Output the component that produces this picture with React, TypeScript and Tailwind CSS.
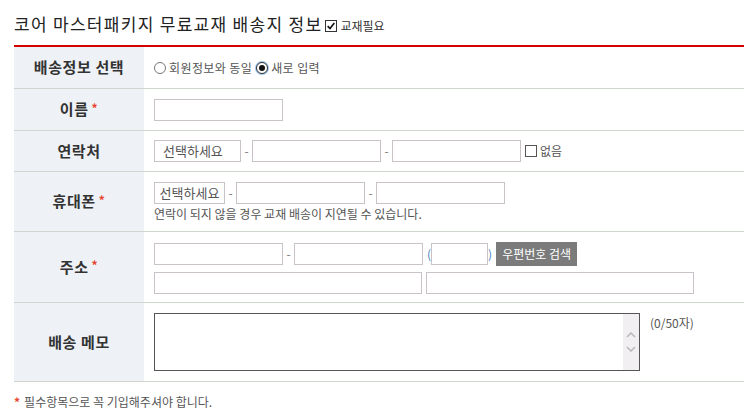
import React from 'react'

const font = "font-['Noto_Sans_CJK_KR','Noto_Sans',sans-serif]"

function Star() {
  return <span className="ml-[3px] text-[12px] font-bold text-[#e8412c] relative -top-[2px]">*</span>
}

function Box({ w, children }: { w: string; children?: React.ReactNode }) {
  return (
    <div className={`${w} h-[22px] border border-[#c9c2c9] bg-white flex items-center px-[8px] whitespace-nowrap text-[13px] text-[#555]`}>
      {children}
    </div>
  )
}

function Dash() {
  return <span className="w-[11px] text-center text-[12px] text-[#777]">-</span>
}

function Row({
  label,
  required,
  h,
  top,
  children,
}: {
  label: string
  required?: boolean
  h: string
  top?: boolean
  children: React.ReactNode
}) {
  return (
    <div className={`grid grid-cols-[130px_1fr] ${h} border-b border-[#cfd6cd]`}>
      <div className="flex items-center justify-center bg-[#eef1f6] text-[15px] font-bold tracking-[0.6px] text-[#333]">
        {label}
        {required && <Star />}
      </div>
      <div className={`flex flex-col pl-[10px] ${top ? 'pt-[10px]' : 'justify-center'}`}>{children}</div>
    </div>
  )
}

function Radio({ checked, label }: { checked?: boolean; label: string }) {
  return (
    <label className="flex items-center gap-[3px]">
      {checked ? (
        <span className="flex h-[12px] w-[12px] items-center justify-center rounded-full border border-[#333] bg-white shadow-[0_0_0_1px_#9cc3ea]">
          <span className="h-[6px] w-[6px] rounded-full bg-[#111]" />
        </span>
      ) : (
        <span className="h-[12px] w-[12px] rounded-full border border-[#777] bg-white" />
      )}
      <span className="text-[12px] text-[#555] tracking-[0.4px]">{label}</span>
    </label>
  )
}

export default function App() {
  return (
    <div className={`w-[754px] h-[417px] bg-white ${font}`}>
      <div className="flex h-[45px] items-end pl-[14px] pb-[9px]">
        <h2 className="text-[17px] leading-[24px] tracking-[1.3px] text-[#222]">코어 마스터패키지 무료교재 배송지 정보</h2>
        <label className="ml-[3px] mb-[1px] flex items-center gap-[3px]">
          <span className="flex h-[12px] w-[12px] items-center justify-center border border-[#333] bg-white">
            <svg viewBox="0 0 12 12" className="h-[10px] w-[10px]">
              <path d="M2 6.2 L4.8 9 L10 2.5" fill="none" stroke="#111" strokeWidth="2" />
            </svg>
          </span>
          <span className="text-[12px] text-[#333]">교재필요</span>
        </label>
      </div>

      <div className="ml-[14px] w-[730px] border-t-2 border-[#d40000]">
        <Row label="배송정보 선택" h="h-[42px]">
          <div className="flex items-center gap-[4px]">
            <Radio label="회원정보와 동일" />
            <Radio checked label="새로 입력" />
          </div>
        </Row>

        <Row label="이름" required h="h-[42px]">
          <Box w="w-[129px]" />
        </Row>

        <Row label="연락처" h="h-[41px]">
          <div className="flex items-center">
            <Box w="w-[87px]">선택하세요</Box>
            <Dash />
            <Box w="w-[129px]" />
            <Dash />
            <Box w="w-[129px]" />
            <span className="ml-[4px] h-[12px] w-[12px] border border-[#555] bg-white" />
            <span className="ml-[3px] text-[12px] text-[#555]">없음</span>
          </div>
        </Row>

        <Row label="휴대폰" required h="h-[60px]" top>
          <div className="flex items-center">
            <div className="flex h-[22px] w-[71px] items-center justify-center whitespace-nowrap border border-[#c9c2c9] bg-white text-[13px] text-[#555]">
              선택하세요
            </div>
            <Dash />
            <Box w="w-[129px]" />
            <Dash />
            <Box w="w-[129px]" />
          </div>
          <p className="mt-[2px] text-[12px] leading-[16px] text-[#555]">
            연락이 되지 않을 경우 교재 배송이 지연될 수 있습니다.
          </p>
        </Row>

        <Row label="주소" required h="h-[71px]" top>
          <div className="flex items-center">
            <Box w="w-[129px]" />
            <Dash />
            <Box w="w-[129px]" />
            <span className="ml-[4px] text-[12px] text-[#4a7fc0]">(</span>
            <Box w="w-[57px]" />
            <span className="text-[12px] text-[#4a7fc0]">)</span>
            <button className="ml-[4px] h-[24px] w-[81px] bg-[#7b7b7b] text-[12px] text-white">
              우편번호 검색
            </button>
          </div>
          <div className="mt-[6px] flex gap-[4px]">
            <Box w="w-[268px]" />
            <Box w="w-[268px]" />
          </div>
        </Row>

        <Row label="배송 메모" h="h-[79px]" top>
          <div className="flex items-start">
            <div className="flex h-[58px] w-[486px] border border-[#555] bg-white">
              <textarea className="h-full flex-1 resize-none outline-none" />
              <div className="flex w-[16px] flex-col items-center justify-center gap-[8px] bg-[#f1eff2]">
                <svg viewBox="0 0 10 6" className="h-[6px] w-[10px]">
                  <path d="M1 5 L5 1 L9 5" fill="none" stroke="#b8b8b8" strokeWidth="1.5" />
                </svg>
                <svg viewBox="0 0 10 6" className="h-[6px] w-[10px]">
                  <path d="M1 1 L5 5 L9 1" fill="none" stroke="#b8b8b8" strokeWidth="1.5" />
                </svg>
              </div>
            </div>
            <span className="ml-[10px] mt-[1px] text-[12px] text-[#555]">(0/50자)</span>
          </div>
        </Row>
      </div>

      <p className="mt-[11px] pl-[14px] text-[12px] text-[#555]">
        <span className="mr-[4px] font-bold text-[#e8412c]">*</span>
        필수항목으로 꼭 기입해주셔야 합니다.
      </p>
    </div>
  )
}
